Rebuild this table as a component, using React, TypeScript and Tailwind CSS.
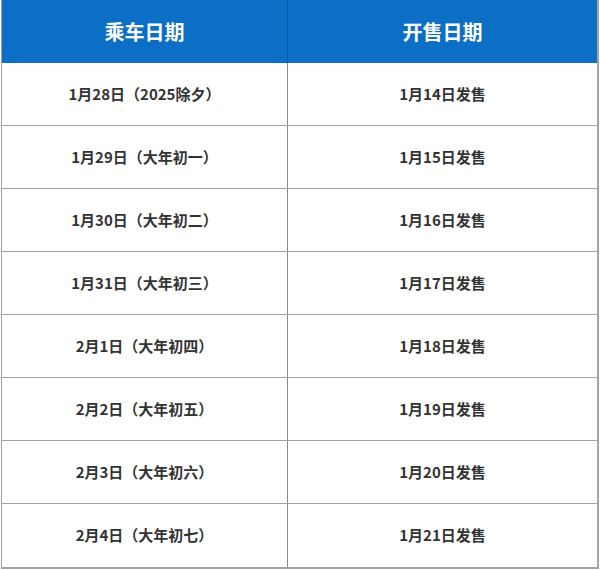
const rows: [string, string][] = [
  ['1月28日（2025除夕）', '1月14日发售'],
  ['1月29日（大年初一）', '1月15日发售'],
  ['1月30日（大年初二）', '1月16日发售'],
  ['1月31日（大年初三）', '1月17日发售'],
  ['2月1日（大年初四）', '1月18日发售'],
  ['2月2日（大年初五）', '1月19日发售'],
  ['2月3日（大年初六）', '1月20日发售'],
  ['2月4日（大年初七）', '1月21日发售'],
]

export default function App() {
  return (
    <div className="w-[600px] h-[570px] bg-white font-['Noto_Sans_CJK_SC',sans-serif]">
      <div className="ml-px w-[598px] border-l border-r-2 border-b-2 border-[#a3a3a3]">
        <div className="grid grid-cols-[286px_1fr] h-[63px] bg-[#0b6fc6] text-white text-[20px] font-bold">
          <div className="flex items-center justify-center border-r border-[#0a5aa3]">乘车日期</div>
          <div className="flex items-center justify-center">开售日期</div>
        </div>
        {rows.map(([ride, sale], i) => (
          <div
            key={ride}
            className={`grid grid-cols-[286px_1fr] h-[63px] text-[15px] font-bold text-[#333333] ${i < rows.length - 1 ? 'border-b border-[#a3a3a3]' : ''}`}
          >
            <div className="flex items-center justify-center border-r border-[#8a8a8a]">{ride}</div>
            <div className="flex items-center justify-center">{sale}</div>
          </div>
        ))}
      </div>
    </div>
  )
}
